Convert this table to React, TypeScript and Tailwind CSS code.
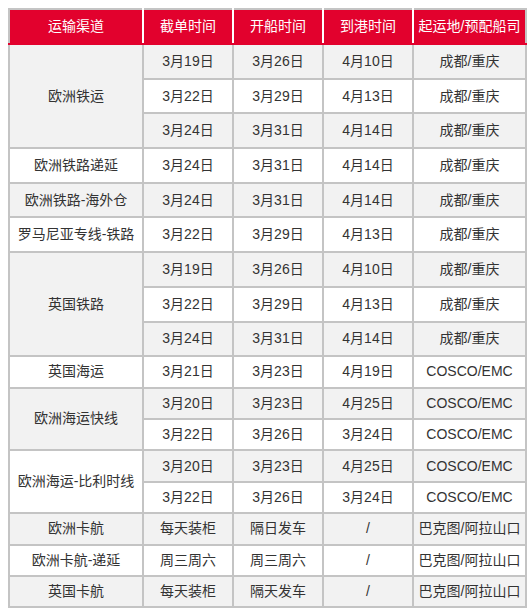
type Group = {
  name: string;
  nameBg?: string;
  rows: string[][];
};

const groups: Group[] = [
  {
    name: "欧洲铁运",
    rows: [
      ["3月19日", "3月26日", "4月10日", "成都/重庆"],
      ["3月22日", "3月29日", "4月13日", "成都/重庆"],
      ["3月24日", "3月31日", "4月14日", "成都/重庆"],
    ],
  },
  { name: "欧洲铁路递延", rows: [["3月24日", "3月31日", "4月14日", "成都/重庆"]] },
  { name: "欧洲铁路-海外仓", rows: [["3月24日", "3月31日", "4月14日", "成都/重庆"]] },
  { name: "罗马尼亚专线-铁路", rows: [["3月22日", "3月29日", "4月13日", "成都/重庆"]] },
  {
    name: "英国铁路",
    rows: [
      ["3月19日", "3月26日", "4月10日", "成都/重庆"],
      ["3月22日", "3月29日", "4月13日", "成都/重庆"],
      ["3月24日", "3月31日", "4月14日", "成都/重庆"],
    ],
  },
  { name: "英国海运", rows: [["3月21日", "3月23日", "4月19日", "COSCO/EMC"]] },
  {
    name: "欧洲海运快线",
    rows: [
      ["3月20日", "3月23日", "4月25日", "COSCO/EMC"],
      ["3月22日", "3月26日", "3月24日", "COSCO/EMC"],
    ],
  },
  {
    name: "欧洲海运-比利时线",
    nameBg: "bg-white",
    rows: [
      ["3月20日", "3月23日", "4月25日", "COSCO/EMC"],
      ["3月22日", "3月26日", "3月24日", "COSCO/EMC"],
    ],
  },
  { name: "欧洲卡航", rows: [["每天装柜", "隔日发车", "/", "巴克图/阿拉山口"]] },
  { name: "欧洲卡航-递延", rows: [["周三周六", "周三周六", "/", "巴克图/阿拉山口"]] },
  { name: "英国卡航", rows: [["每天装柜", "隔天发车", "/", "巴克图/阿拉山口"]] },
];

const headers = ["运输渠道", "截单时间", "开船时间", "到港时间", "起运地/预配船司"];

const cell = "border-2 border-[#c4c4c4] text-center align-middle p-0";

export default function App() {
  let rowNo = 0;

  return (
    <div
      className="bg-white p-2 text-[14px] text-[#333333]"
      style={{ fontFamily: '"Liberation Sans", Arial, "Noto Sans CJK SC", sans-serif' }}
    >
      <table className="w-[517px] table-fixed border-collapse">
        <colgroup>
          <col className="w-[134px]" />
          <col className="w-[90px]" />
          <col className="w-[90px]" />
          <col className="w-[90px]" />
          <col className="w-[113px]" />
        </colgroup>
        <thead>
          <tr className="h-[35px]">
            {headers.map((h, i) => (
              <th
                key={h}
                className={`border-2 border-white border-t-[#c4c4c4] border-b-[#e2012d] bg-[#e2012d] p-0 text-center font-normal text-white ${
                  i === 0 ? "border-l-[#c4c4c4]" : ""
                } ${i === headers.length - 1 ? "border-r-[#c4c4c4]" : ""}`}
              >
                {h}
              </th>
            ))}
          </tr>
        </thead>
        <tbody>
          {groups.map((g) =>
            g.rows.map((r, j) => {
              rowNo += 1;
              const bg = rowNo % 2 === 1 ? "bg-[#f2f2f2]" : "bg-white";
              const h = rowNo <= 9 ? "h-[34.7px]" : "h-[31.4px]";
              return (
                <tr key={rowNo} className={h}>
                  {j === 0 && (
                    <td rowSpan={g.rows.length} className={`${cell} ${g.nameBg ?? bg}`}>
                      {g.name}
                    </td>
                  )}
                  {r.map((v, k) => (
                    <td key={k} className={`${cell} ${bg}`}>
                      {v}
                    </td>
                  ))}
                </tr>
              );
            })
          )}
        </tbody>
      </table>
    </div>
  );
}
